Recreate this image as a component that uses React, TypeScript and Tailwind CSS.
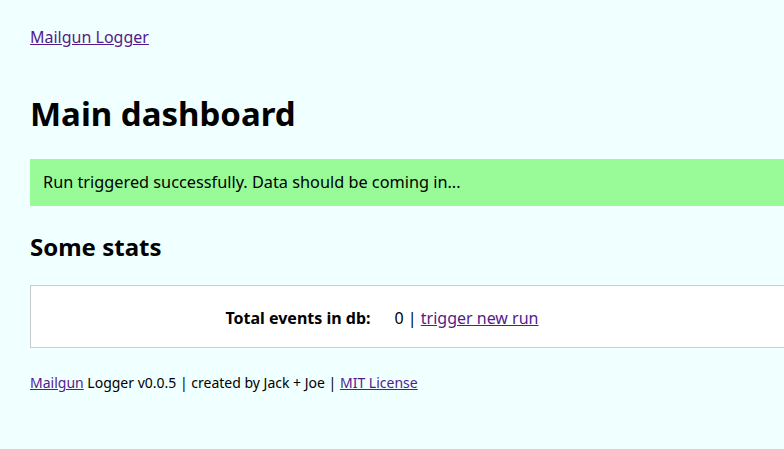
export default function App() {
  return (
    <div className="min-h-screen overflow-hidden bg-[#f0ffff] px-[30px] pt-[26px] text-black font-['Noto_Sans',sans-serif]">
      <div className="w-[900px]">
        <nav className="text-[16px] leading-[22px]">
          <a href="#" className="text-[#551a8b] underline">Mailgun Logger</a>
        </nav>

        <h1 className="mt-[46px] text-[33px] font-bold leading-[40px]">Main dashboard</h1>

        <div className="mt-[25px] h-[47px] bg-[#98fb98] px-[13px] flex items-center text-[16.3px]">
          Run triggered successfully. Data should be coming in...
        </div>

        <h2 className="mt-[26px] text-[24px] font-bold leading-[30px]">Some stats</h2>

        <table className="mt-[23px] w-full border border-[#cccccc] bg-white text-[16px]">
          <tbody>
            <tr className="h-[62px]">
              <th className="w-[340px] pt-[3px] text-right font-bold">Total events in db:</th>
              <td className="pl-[24px] pt-[3px]">
                0 | <a href="#" className="text-[#551a8b] underline">trigger new run</a>
              </td>
            </tr>
          </tbody>
        </table>

        <footer className="mt-[25px] text-[14px] leading-[20px]">
          <a href="#" className="text-[#551a8b] underline">Mailgun</a> Logger v0.0.5 | created by Jack + Joe |{" "}
          <a href="#" className="text-[#551a8b] underline">MIT License</a>
        </footer>
      </div>
    </div>
  );
}
